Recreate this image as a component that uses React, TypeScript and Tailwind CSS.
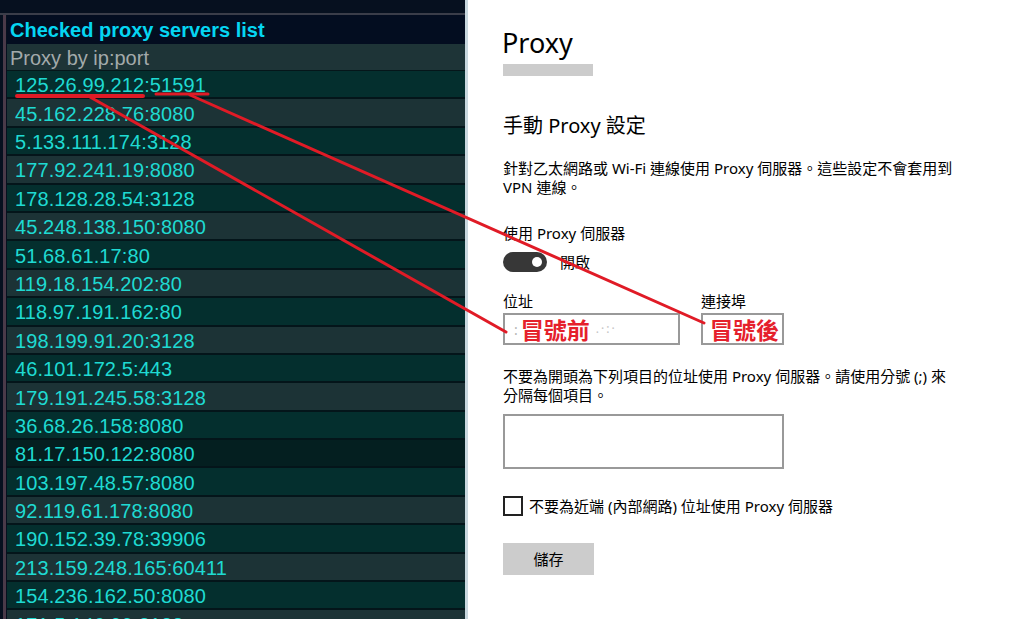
import React from 'react'

const proxies = [
    '125.26.99.212:51591',
    '45.162.228.76:8080',
    '5.133.111.174:3128',
    '177.92.241.19:8080',
    '178.128.28.54:3128',
    '45.248.138.150:8080',
    '51.68.61.17:80',
    '119.18.154.202:80',
    '118.97.191.162:80',
    '198.199.91.20:3128',
    '46.101.172.5:443',
    '179.191.245.58:3128',
    '36.68.26.158:8080',
    '81.17.150.122:8080',
    '103.197.48.57:8080',
    '92.119.61.178:8080',
    '190.152.39.78:39906',
    '213.159.248.165:60411',
    '154.236.162.50:8080',
    '171.5.146.99:3128',
]

const rowBg = (i: number) => {
    if (i === 13) return 'bg-[#041f20]'
    return i % 2 === 0 ? 'bg-[#042f2e]' : 'bg-[#1c3336]'
}

const ProxyList = () => {
    return (
        <div className="w-[465px] shrink-0 flex flex-col bg-[#06101f] font-['Liberation_Sans',Arial,sans-serif]">
            <div className="h-[13px] shrink-0" />
            <div className="h-[2px] shrink-0 bg-[#3a3d49]" />
            <div className="flex flex-1 min-h-0">
                <div className="w-[3px] shrink-0" />
                <div className="w-[3px] shrink-0 bg-[#4a3a49]" />
                <div className="w-[1px] shrink-0" />
                <div className="flex-1 flex flex-col">
                    <div className="h-[29px] shrink-0 flex items-center pl-[3px] bg-[#030d20] text-[20px] font-bold text-[#05d6f2]">
                        Checked proxy servers list
                    </div>
                    <div className="h-[27px] shrink-0 flex items-center pl-[3px] pt-[1px] bg-[#1e3437] text-[20px] text-[#a3aaab] border-b-[1px] border-[#05161a]">
                        Proxy by ip:port
                    </div>
                    {proxies.map((p, i) => (
                        <div key={p} className={`h-[28.4px] shrink-0 flex items-center pl-[8px] pt-[2px] border-b-2 border-[#04151a] text-[20px] tracking-[0.1px] text-[#1fdad2] ${rowBg(i)}`}>
                            {p}
                        </div>
                    ))}
                </div>
            </div>
        </div>
    )
}

const Settings = () => {
    return (
        <div className="flex-1 border-l-[3px] border-[#c8d7de] bg-white pl-[35px] text-black font-['Noto_Sans','Noto_Sans_CJK_TC',sans-serif]">
            <div className="pt-[26px] text-[27px] leading-[34px] -ml-[1px]">Proxy</div>
            <div className="mt-[4px] w-[90px] h-[12px] bg-[#cccccc]" />

            <div className="mt-[36px] text-[20px] leading-[28px]">手動 Proxy 設定</div>

            <div className="mt-[19px] text-[15px] leading-[19px]">
                針對乙太網路或 Wi-Fi 連線使用 Proxy 伺服器。這些設定不會套用到<br />
                VPN 連線。
            </div>

            <div className="mt-[26px] text-[15px] leading-[20px]">使用 Proxy 伺服器</div>
            <div className="mt-[9px] flex items-center">
                <div className="w-[44px] h-[20px] rounded-full bg-[#373737] flex items-center justify-end pr-[5px]">
                    <div className="w-[10px] h-[10px] rounded-full bg-white" />
                </div>
                <div className="ml-[13px] text-[15px] leading-[20px]">開啟</div>
            </div>

            <div className="mt-[19px] flex">
                <div className="w-[177px]">
                    <div className="text-[15px] leading-[20px]">位址</div>
                    <div className="mt-[2px] h-[32px] border-2 border-[#999999] flex items-center pl-[9px] overflow-hidden">
                        <span className="text-[#b5b5b5] text-[14px]">:</span>
                        <span className="ml-[3px] text-[23px] font-bold text-[#e5202b] leading-none font-['Noto_Sans_CJK_TC',sans-serif]">冒號前</span>
                        <span className="ml-[6px] text-[#c4c4c4] text-[12px] tracking-[2px]">.·:·</span>
                    </div>
                </div>
                <div className="ml-[21px] w-[83px]">
                    <div className="text-[15px] leading-[20px]">連接埠</div>
                    <div className="mt-[2px] h-[32px] border-2 border-[#999999] flex items-center pl-[7px] overflow-hidden">
                        <span className="text-[23px] font-bold text-[#e5202b] leading-none whitespace-nowrap font-['Noto_Sans_CJK_TC',sans-serif]">冒號後</span>
                    </div>
                </div>
            </div>

            <div className="mt-[22px] text-[15px] leading-[19px]">
                不要為開頭為下列項目的位址使用 Proxy 伺服器。請使用分號 (;) 來<br />
                分隔每個項目。
            </div>
            <div className="mt-[9px] w-[281px] h-[55px] border-2 border-[#999999]" />

            <div className="mt-[27px] flex items-center">
                <div className="w-[20px] h-[20px] border-2 border-[#222222]" />
                <div className="ml-[6px] text-[15px] leading-[20px]">不要為近端 (內部網路) 位址使用 Proxy 伺服器</div>
            </div>

            <div className="mt-[27px] w-[91px] h-[32px] bg-[#cccccc] flex items-center justify-center text-[15px]">
                儲存
            </div>
        </div>
    )
}

const Annotations = () => {
    return (
        <svg className="absolute inset-0 pointer-events-none" width="1024" height="619" viewBox="0 0 1024 619">
            <g stroke="#e01b26" strokeLinecap="round" fill="none">
                <line x1="17" y1="96" x2="143" y2="96" strokeWidth="4" />
                <line x1="156" y1="94" x2="208" y2="94" strokeWidth="3" />
                <line x1="90" y1="97" x2="506" y2="332" strokeWidth="3" />
                <line x1="190" y1="95" x2="704" y2="323" strokeWidth="3" />
            </g>
        </svg>
    )
}

export default function App() {
    return (
        <div className="relative flex h-[619px] w-[1024px] overflow-hidden bg-white">
            <ProxyList />
            <Settings />
            <Annotations />
        </div>
    )
}
